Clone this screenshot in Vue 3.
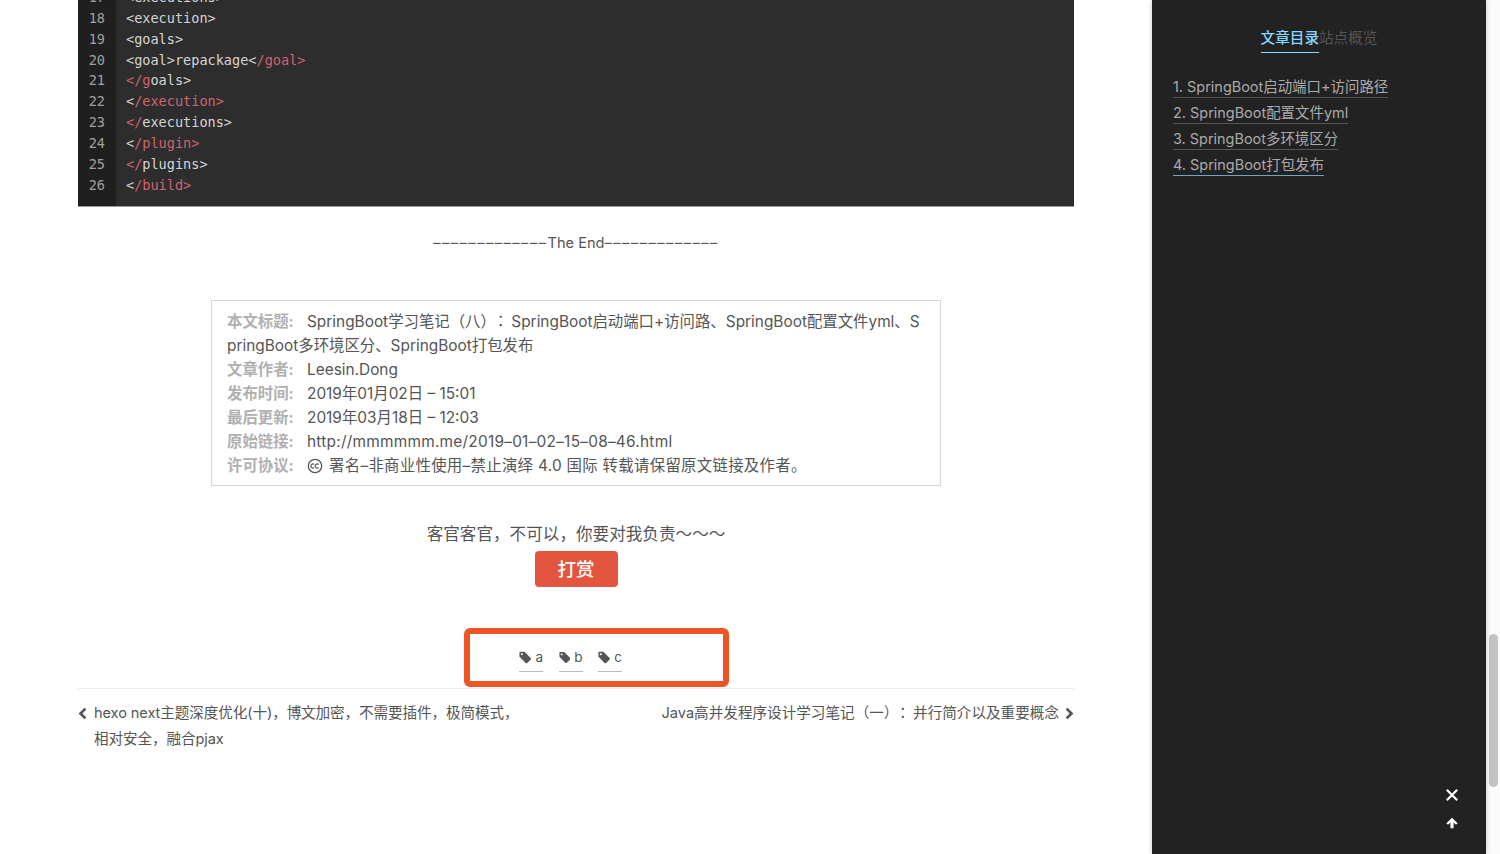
<script setup>
const codeLines = [
  { n: 17, parts: [['t', '<executions>']] },
  { n: 18, parts: [['t', '<execution>']] },
  { n: 19, parts: [['t', '<goals>']] },
  { n: 20, parts: [['t', '<goal>repackage<'], ['r', '/goal>']] },
  { n: 21, parts: [['r', '</g'], ['t', 'oals>']] },
  { n: 22, parts: [['t', '<'], ['r', '/execution>']] },
  { n: 23, parts: [['r', '</'], ['t', 'executions>']] },
  { n: 24, parts: [['t', '<'], ['r', '/plugin>']] },
  { n: 25, parts: [['r', '</'], ['t', 'plugins>']] },
  { n: 26, parts: [['t', '<'], ['r', '/build>']] }
]
const meta = [
  { k: '文章作者:', v: 'Leesin.Dong' },
  { k: '发布时间:', v: '2019年01月02日 – 15:01' },
  { k: '最后更新:', v: '2019年03月18日 – 12:03' },
  { k: '原始链接:', v: 'http://mmmmmm.me/2019–01–02–15–08–46.html', url: true }
]
const tags = ['a', 'b', 'c']
const toc = [
  '1. SpringBoot启动端口+访问路径',
  '2. SpringBoot配置文件yml',
  '3. SpringBoot多环境区分',
  '4. SpringBoot打包发布'
]
</script>

<template>
  <div class="page">
    <main class="main">
      <div class="code">
        <div class="gutter">
          <div v-for="l in codeLines" :key="l.n" class="ln">{{ l.n }}</div>
        </div>
        <div class="src">
          <div v-for="l in codeLines" :key="l.n" class="ln">
            <span v-for="(p, i) in l.parts" :key="i" :class="p[0] === 'r' ? 'red' : ''">{{ p[1] }}</span>
          </div>
        </div>
      </div>

      <div class="end"><span class="dashes">–––––––––––––</span>The End<span class="dashes">–––––––––––––</span></div>

      <div class="copyright">
        <div class="row"><span class="k">本文标题:</span>SpringBoot学习笔记（八）<span class="tc">：</span>SpringBoot启动端口+访问路、SpringBoot配置文件yml、SpringBoot多环境区分、SpringBoot打包发布</div>
        <div v-for="m in meta" :key="m.k" class="row"><span class="k">{{ m.k }}</span><span :class="{ url: m.url }">{{ m.v }}</span></div>
        <div class="row license">
          <span class="k">许可协议:</span>
          <svg class="cc" viewBox="0 0 16 16" width="16" height="16">
            <circle cx="8" cy="8" r="6.7" fill="none" stroke="#555" stroke-width="1.3"/>
            <path d="M7.2 6.5a2 2 0 1 0 0 3M11.6 6.5a2 2 0 1 0 0 3" fill="none" stroke="#555" stroke-width="1.2"/>
          </svg>
          <span class="license-text">署名–非商业性使用–禁止演绎 4.0 国际 转载请保留原文链接及作者。</span>
        </div>
      </div>

      <div class="reward">
        <div class="reward-text">客官客官，不可以，你要对我负责～～～</div>
        <button class="reward-btn">打赏</button>
      </div>

      <div class="tags-wrap">
        <div class="tags-box">
          <a v-for="t in tags" :key="t" class="tag">
            <svg viewBox="0 0 14 14" width="13" height="13">
              <path d="M0.5 1.6C0.5 1 1 0.5 1.6 0.5H6.2L13.2 7.5a1.3 1.3 0 0 1 0 1.8L9.3 13.2a1.3 1.3 0 0 1-1.8 0L0.5 6.2Z M3.2 2.1a1.1 1.1 0 1 0 0.01 0Z" fill="#555" fill-rule="evenodd"/>
            </svg>
            {{ t }}
          </a>
        </div>
      </div>

      <nav class="post-nav">
        <a class="prev">
          <svg class="chev" viewBox="0 0 10 14" width="9" height="13"><path d="M8.2 1.6 2.8 7l5.4 5.4" fill="none" stroke="#555" stroke-width="3"/></svg>
          <span>hexo next主题深度优化(十)，博文加密，不需要插件，极简模式，相对安全，融合pjax</span>
        </a>
        <a class="next">
          <span>Java高并发程序设计学习笔记（一）<span class="tc">：</span>并行简介以及重要概念</span>
          <svg class="chev" viewBox="0 0 10 14" width="9" height="13"><path d="M1.8 1.6 7.2 7l-5.4 5.4" fill="none" stroke="#555" stroke-width="3"/></svg>
        </a>
      </nav>
    </main>

    <aside class="sidebar">
      <div class="tabs">
        <span class="tab active">文章目录</span><span class="tab">站点概览</span>
      </div>
      <ul class="toc">
        <li v-for="(t, i) in toc" :key="t"><a :class="{ current: i === 3 }">{{ t }}</a></li>
      </ul>
      <div class="controls">
        <svg viewBox="0 0 14 14" width="14" height="14"><path d="M1.8 1.8 12.2 12.2M12.2 1.8 1.8 12.2" stroke="#fff" stroke-width="2.2" fill="none"/></svg>
        <svg viewBox="0 0 12 12" width="12" height="12"><path d="M6 0.8 11.6 6.2 10 7.7 7.6 5.4V11.2H4.4V5.4L2 7.7 0.4 6.2Z" fill="#fff"/></svg>
      </div>
    </aside>

    <div class="scrollbar"><div class="thumb"></div></div>
  </div>
</template>

<style scoped>
.page {
  display: flex;
  width: 1500px;
  height: 854px;
  overflow: hidden;
  background: #fff;
  color: #555;
  font-family: Inter, "Noto Sans CJK SC", sans-serif;
  font-size: 16px;
  text-spacing-trim: space-all;
}
.tc {
  font-family: "Noto Sans CJK TC", sans-serif;
  line-height: 1;
  margin: 0 3px 0 -3px;
}
.main {
  width: 1152px;
  flex: none;
  padding-left: 78px;
  box-sizing: border-box;
}
.code {
  width: 996px;
  height: 220px;
  margin-top: -13.2px;
  box-sizing: border-box;
  display: flex;
  background: #2d2d2d;
  border-bottom: 1px solid #999;
  font-family: "DejaVu Sans Mono", monospace;
  font-size: 13.55px;
  line-height: 20.9px;
  color: #d4d4d4;
}
.gutter {
  width: 38px;
  box-sizing: border-box;
  background: #1f1f1f;
  padding-right: 11px;
  text-align: right;
  color: #a0a0a0;
}
.src {
  padding-left: 10px;
}
.red {
  color: #d2636f;
}
.end {
  margin-top: 24px;
  width: 996px;
  text-align: center;
  line-height: 24px;
  font-size: 14.6px;
  color: #555;
}
.dashes {
  letter-spacing: 1.5px;
}
.copyright {
  width: 730px;
  box-sizing: border-box;
  margin: 45px 0 0 133px;
  padding: 9px 15px 7px;
  border: 1px solid #d4d4d4;
  line-height: 24px;
  font-size: 15.4px;
  word-break: break-all;
}
.k {
  display: inline-block;
  width: 80px;
  color: #b0b0b0;
  font-weight: 700;
  white-space: nowrap;
  line-height: 1;
}
.url {
  letter-spacing: 0.25px;
}
.license {
  display: flex;
  align-items: center;
  height: 24px;
}
.cc {
  margin-right: 6px;
}
.license-text {
  letter-spacing: 0.3px;
}
.reward {
  width: 996px;
  margin-top: 36px;
  text-align: center;
}
.reward-text {
  line-height: 24px;
  font-size: 16.6px;
}
.reward-btn {
  display: block;
  margin: 5px auto 0;
  width: 83px;
  height: 36px;
  padding: 0 0 2px;
  border: 0;
  border-radius: 4px;
  background: #e4553f;
  color: #fff;
  font: 500 18.5px "Noto Sans CJK SC", sans-serif;
}
.tags-wrap {
  margin-top: 41px;
  padding-left: 386px;
}
.tags-box {
  width: 265px;
  height: 59px;
  box-sizing: border-box;
  border: 6px solid #ee5524;
  border-radius: 6px;
  display: flex;
  gap: 15.5px;
  padding: 10px 0 0 49px;
}
.tag {
  display: flex;
  align-items: center;
  gap: 4px;
  width: 24px;
  height: 27px;
  box-sizing: content-box;
  border-bottom: 1px solid #bbb;
  font-size: 13.5px;
  color: #555;
  white-space: nowrap;
}
.post-nav {
  width: 996px;
  margin-top: 1px;
  padding-top: 11px;
  border-top: 1px solid #eee;
  display: flex;
  justify-content: space-between;
  font-size: 14.6px;
  line-height: 26px;
}
.prev, .next {
  display: flex;
  align-items: flex-start;
  width: 480px;
}
.next {
  justify-content: flex-end;
}
.prev > span {
  margin-left: 7px;
  width: 428px;
  letter-spacing: -0.1px;
}
.next > span {
  margin-right: 6px;
  white-space: nowrap;
}
.chev {
  margin-top: 7px;
  flex: none;
}
.sidebar {
  position: relative;
  width: 334px;
  flex: none;
  box-sizing: border-box;
  background: #222;
  box-shadow: 0 0 5px rgba(0, 0, 0, 0.22);
  display: flex;
  flex-direction: column;
  color: #aaa;
}
.tabs {
  margin-top: 25px;
  display: flex;
  justify-content: center;
  font-family: "Noto Sans CJK SC", sans-serif;
  font-size: 14.6px;
  line-height: 24px;
}
.tab {
  color: #555;
  padding-bottom: 3px;
}
.tab.active {
  color: #87daff;
  font-weight: 500;
  border-bottom: 1px solid #87daff;
}
.toc {
  list-style: none;
  margin: 23px 0 0;
  padding: 0 0 0 21px;
  font-size: 14.45px;
  line-height: 21px;
}
.toc li {
  height: 26px;
}
.toc a {
  display: inline-block;
  border-bottom: 1px solid #555;
  color: #aaa;
}
.toc a.current {
  border-bottom-color: #6aa8c8;
}
.controls {
  margin-top: auto;
  margin-left: 293px;
  margin-bottom: 25px;
  display: flex;
  flex-direction: column;
  align-items: center;
  gap: 15px;
  width: 14px;
}
.scrollbar {
  flex: 1;
  background: #fafafa;
  padding: 634px 2px 0 3px;
  box-sizing: border-box;
}
.thumb {
  height: 153px;
  border-radius: 5px;
  background: #c2c2c2;
}
</style>
